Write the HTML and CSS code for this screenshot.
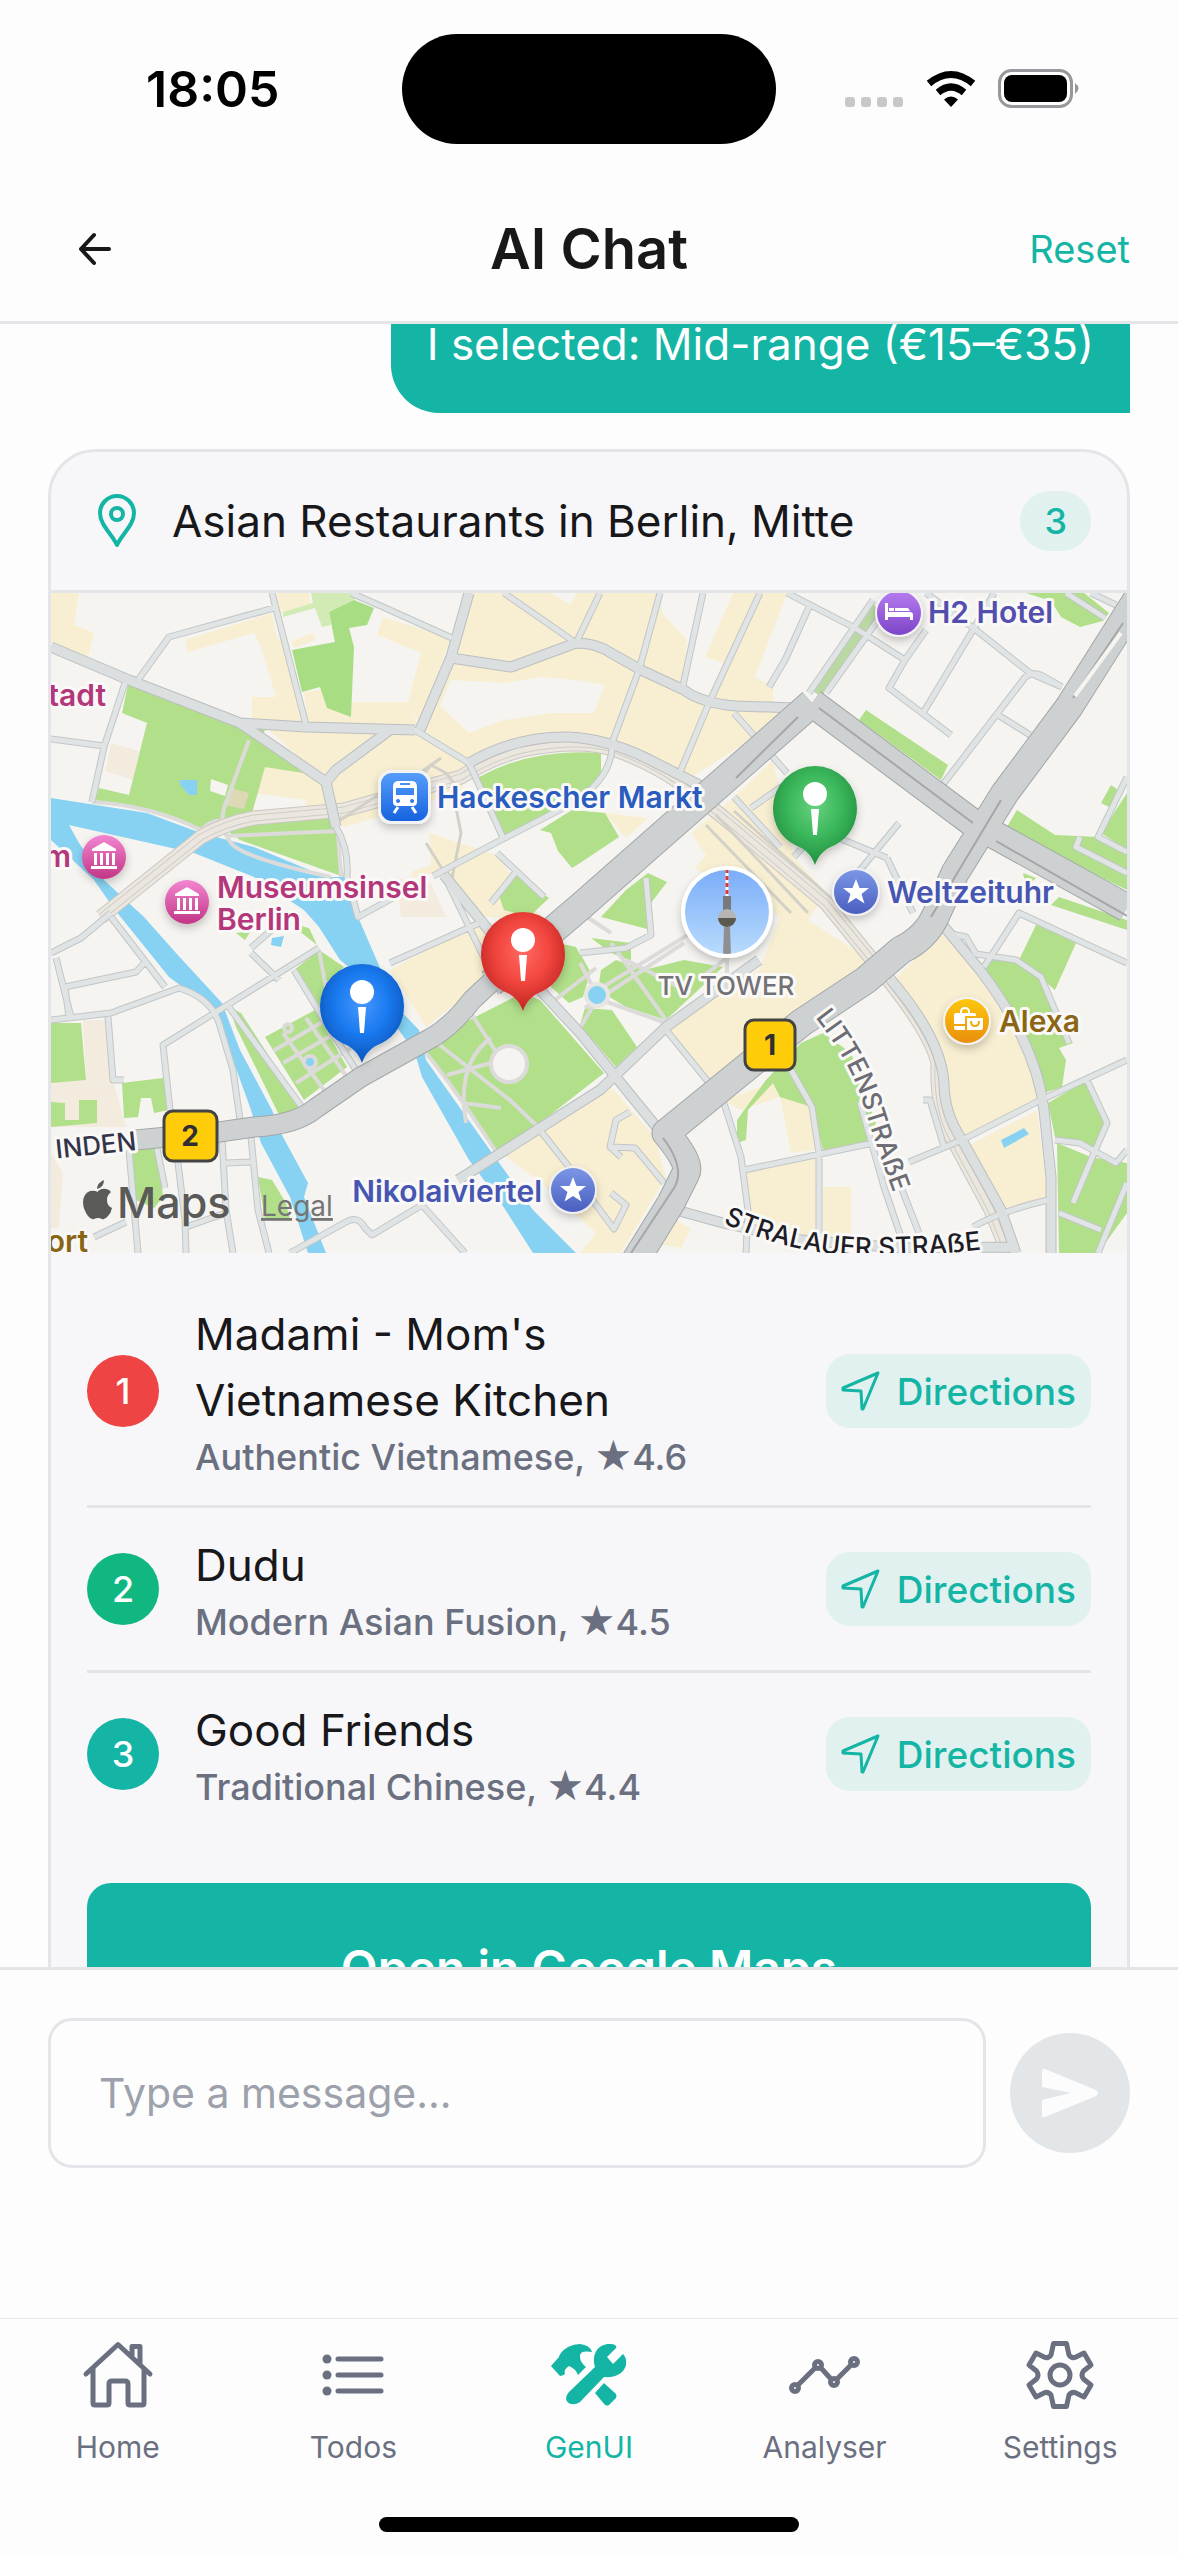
FILE: index.html
```html
<!DOCTYPE html>
<html lang="en">

<head>
    <meta charset="UTF-8" />
    <meta name="viewport" content="width=device-width, initial-scale=1.0" />
    <title>AI Chat</title>
    <link rel="stylesheet" href="styles.css">
</head>

<body>
    <div class="status-bar">
        <span class="time">18:05</span>
        <div class="island"></div>
        <div class="status-icons">
            <svg width="60" height="40" viewBox="0 0 60 40" fill="#c8c8c8">
                <rect x="1" y="28" width="10" height="10" rx="3" />
                <rect x="17" y="28" width="10" height="10" rx="3" />
                <rect x="33" y="28" width="10" height="10" rx="3" />
                <rect x="49" y="28" width="10" height="10" rx="3" />
            </svg>
            <svg width="50" height="40" viewBox="0 0 50 40">
                <path d="M25 38l-7-7.500q7-6 14 0z" />
                <path d="M12 23.500q13-11 26 0" fill="none" stroke="#000" stroke-width="7" />
                <path d="M3 14.500q22-18 44 0" fill="none" stroke="#000" stroke-width="7" />
            </svg>
            <svg width="82" height="40" viewBox="0 0 82 40">
                <rect x="1.500" y="1.500" width="72" height="36" rx="12" fill="#fff" stroke="#98989c" stroke-width="3" />
                <rect x="6" y="6" width="63" height="27" rx="8" />
                <path d="M77 14q7 5 0 11z" fill="#98989c" />
            </svg>
        </div>
    </div>

    <header class="header">
        <button class="back" aria-label="Back">
            <svg width="34" height="34" viewBox="0 0 34 34" fill="none" stroke="#18181b" stroke-width="4" stroke-linecap="round" stroke-linejoin="round">
                <path d="M31 17H3M16 3L3 17l13 14" />
            </svg>
        </button>
        <h1>AI Chat</h1>
        <button class="reset">Reset</button>
    </header>

    <main class="chat">
        <p class="bubble">I selected: Mid-range (€15–€35)</p>

        <section class="card">
            <div class="card-header">
                <svg width="38" height="54" viewBox="0 0 38 54" fill="none" stroke="#14b5a5" stroke-width="4" stroke-linejoin="round">
                    <path d="M19 51C14 40 2 31 2 19a17 17 0 0 1 34 0c0 12-12 21-17 32z" />
                    <circle cx="19" cy="20" r="6" />
                </svg>
                <h2>Asian Restaurants in Berlin, Mitte</h2>
                <span class="count">3</span>
            </div>

            <svg class="map" viewBox="0 0 1076 660" preserveAspectRatio="xMidYMid slice" role="img" aria-label="Map of Berlin Mitte">
                <defs>
                    <linearGradient id="pink" x2="0" y2="1"><stop stop-color="#f286d0" /><stop offset="1" stop-color="#c23585" /></linearGradient>
                    <linearGradient id="indigo" x2="0" y2="1"><stop stop-color="#7b96e6" /><stop offset="1" stop-color="#4a5fc0" /></linearGradient>
                    <linearGradient id="purple" x2="0" y2="1"><stop stop-color="#b67cf0" /><stop offset="1" stop-color="#7d45c8" /></linearGradient>
                    <linearGradient id="train" x2="0" y2="1"><stop stop-color="#559dfa" /><stop offset="1" stop-color="#1763e0" /></linearGradient>
                    <linearGradient id="gold" x2="0" y2="1"><stop stop-color="#fdc70a" /><stop offset="1" stop-color="#ea8e0c" /></linearGradient>
                    <linearGradient id="sky" x2="0" y2="1"><stop stop-color="#7badf8" /><stop offset="1" stop-color="#b8dbfd" /></linearGradient>
                    <radialGradient id="green" cy=".4" r=".62"><stop stop-color="#67d07f" /><stop offset=".5" stop-color="#3cb85c" /><stop offset="1" stop-color="#1f8b3d" /></radialGradient>
                    <radialGradient id="red" cy=".4" r=".62"><stop stop-color="#ff6a62" /><stop offset=".5" stop-color="#f2463f" /><stop offset="1" stop-color="#bb211e" /></radialGradient>
                    <radialGradient id="blue" cy=".4" r=".62"><stop stop-color="#4797fd" /><stop offset=".5" stop-color="#1a7af0" /><stop offset="1" stop-color="#0850b4" /></radialGradient>
                    <clipPath id="tower-clip"><circle cx="676" cy="319" r="42" /></clipPath>
                    <filter id="shadow" x="-40%" y="-40%" width="180%" height="180%"><feDropShadow dx="0" dy="4" stdDeviation="4" flood-opacity=".22" /></filter>

                    <g id="museum">
                        <circle r="22" fill="url(#pink)" />
                        <path d="M-12-6v-2L0-15l12 7v2zM-10-4h3V8h-3zM-4-4h3V8h-3zM2-4h3V8H2zM8-4h3V8H8zM-13 9h26v3h-26z" fill="#fff" />
                    </g>
                    <g id="star">
                        <circle r="24" fill="#f3f3f6" opacity=".8" />
                        <circle r="22" fill="url(#indigo)" />
                        <path d="M0-13l3.500 9h9.500l-7.500 6 3 9.500L0 6l-8.500 5.500 3-9.500-7.500-6h9.500z" fill="#fff" />
                    </g>
                    <path id="pin" d="M0 0C-3-9-9-16-20-20-34-27-42-41-42-57a42 42 0 0 1 84 0C42-41 34-27 20-20 9-16 3-9 0 0z" />
                    <g id="needle" fill="#fff">
                        <circle cy="-71" r="12" />
                        <path d="M-4-56h8L2-30h-4z" />
                    </g>

                    <path id="streets-minor" d="M87 87L118 44 223 15M221 0L255 132M75 87L53 154 41 209M0 146L53 153M300 0L332 14 401 45M453 0L525 50 549 0M609 0L588 77 561 150Q562 175 540 196L514 214 450 247 382 283M652 0L631 97M709 0L658 110 627 184M285 234Q298 255 296 284L307 324 360 295M364 137L418 170 453 247M736 0L804 35 854 67 838 95 900 142M758 14L734 67 718 94M822 7L758 100M829 24L775 100M854 67L875 37M922 37L872 120M875 0L925 37 979 80 1011 94M943 0L922 37M1011 94L990 82Q978 78 972 87L890 194M947 122L979 142M1015 0L1054 25M1040 0L1065 12M683 120L736 180M683 204L729 254M1076 184L1047 244 1076 259M1029 244L1025 254 1076 280M60 324L114 394M0 427L60 420 128 395Q160 405 168 430L182 477 189 527M268 355L112 452 119 517 127 570 134 627 135 660M14 394L85 379 96 367M14 394L18 424M57 424L62 487 73 487M78 557L87 660M106 555L114 595M171 544L175 617 182 660M200 544L207 617 218 660M175 570L200 569M43 644L75 629M135 634L175 620M239 660L295 629Q307 622 314 635L321 642 371 612 414 660M485 532L518 574M615 437L672 507 690 564 697 617 695 660M693 577L822 550M740 477L761 514 768 560 768 660M809 509L833 594 850 644M850 594L868 640M858 569L911 547 990 507 1076 467M872 507L879 507 893 554M922 634Q950 618 997 607M1036 487L1056 530 1043 560 1022 610M1004 547L1029 550 1065 570 1076 557M933 374L968 320 1076 370M896 340L915 344 925 361 965 367 990 384 1018 450M579 519L565 527 559 554 570 564M559 554L584 555 613 590M560 600L575 612 563 636 540 605M393 282L450 400M446 260L493 304M464 280L440 310M243 377L275 430 307 480M178 414L253 517M200 360L228 387M200 355L225 333M339 370L435 327M0 360L30 345 60 320M5 365L20 424M529 360L575 355 600 342 595 285M1050 637L1008 620M1076 590L1047 660M736 190L700 215M743 264L790 210M764 235L836 265M790 300L848 230M836 265L862 320" />
                    <path id="streets-mid" d="M0 54L78 87 189 130 255 134 364 137M418 0L400 64 369 137M400 65L460 74 525 50Q545 50 560 60L590 77 633 97Q650 110 685 113L745 115M189 130L275 189 285 234M275 189L285 177 339 137M418 170Q464 143 518 144 555 146 593 164L672 204M393 282L440 340M489 397L529 440 608 537M407 587L549 497 615 434 708 367M890 330L929 377Q985 450 993 517L1000 584 1000 660M840 387Q890 445 893 490 893 520 911 547L950 617 965 660M625 617L672 630 750 647 850 655 965 654" />
                    <path id="avenue-west" d="M85 547L168 539 203 534Q245 532 265 515L310 484 382 444Q402 432 421 407L450 380 529 314" />
                    <path id="avenue-main" d="M440 390L529 314 761 110M761 110L922 230 1076 315M1090 0L1018 114 954 200 904 280 885 322Q875 345 850 357L815 387 750 430 615 540Q640 570 635 580T620 610L583 670" />
                    <path id="rail" d="M50 324L150 244Q175 230 203 225L293 217 410 184Q440 165 471 157 530 145 565 157 600 170 625 187L672 224 775 310 836 385Q880 440 887 470 885 520 904 550L940 617 957 660" />

                    <path id="line-littenstr" d="M764 424Q800 470 812 510T846 610" />
                    <path id="line-stralauer" d="M672 630Q740 661 810 663 880 664 960 653" />
                </defs>

                <rect width="1076" height="660" fill="#f5f4f1" />

                <!-- built-up blocks -->
                <g fill="#f8efd2">
                    <path d="M0 0H28L23 32 43 40 37 64 0 50zM134 47L221 20 226 45 235 50 255 130 201 125V104H225L210 54 203 40 137 59zM253 99L271 97 276 115 300 124 301 109H357L368 134H257zM226 0H258L260 12 228 20zM241 48L262 40 264 47 243 55zM332 24L400 45 368 130 357 109 370 60 326 42z" />
                    <path d="M421 0H736L704 84 722 94V114L745 118 636 187 558 147 525 142 421 170 368 134z" />
                    <path d="M218 137H368L418 170 410 200 293 234 282 222H255V207L203 200 214 172 253 180 275 189zM722 167L743 264 775 300 757 327 708 377 729 324 644 275 655 262 640 240 683 204zM339 377L432 327 439 384 375 434zM378 240L446 262 489 324H435L382 280 360 285 362 278 380 272z" />
                    <path d="M708 377L757 327 829 374 779 400 658 487 615 434zM890 340L929 380Q980 440 986 507L911 547Q885 500 886 460L843 387zM915 554L986 517 997 604 954 620zM693 580L765 564V655L699 637zM772 594H800V650H772zM722 490L757 500 765 557 740 560 729 504 690 517 672 507zM450 560L554 487 604 544 615 584 570 660H529L545 640 490 590z" />
                    <path d="M554 220L597 225 575 245zM610 620L640 635 630 655 600 650z" />
                </g>
                <path d="M32 427H57L62 487 75 534H0V487L35 484zM60 150L88 158 82 187 54 178zM0 560L12 580 8 635H0zM345 285L380 290 395 324H350z" fill="#f4ebdf" />
                <g fill="#f5f4f1">
                    <path d="M400 87L453 90 490 84 525 87 554 92 543 120 500 120 453 127 418 140 389 113zM609 0H682L654 64 672 70 654 110 632 94 636 47 611 20zM500 0H525L520 12z" />
                </g>

                <!-- parks -->
                <path d="M260 0H310L303 7 278 19 280 32 271 34 264 15 232 24V19L262 10z" fill="#d2ebb5" />
                <path d="M241 57L284 49 278 19 303 7 323 15 316 32 298 35 303 54 300 124 276 115 269 94 251 99z" fill="#a9dd83" />
                <g fill="#b1df8a">
                    <path d="M78 87L189 130 252 180 214 174 201 220 171 227 150 235 93 217 44 207 48 195 78 202 96 130 71 120zM189 134L214 135 212 147zM175 237L203 227 282 224 293 284 189 247zM428 184Q480 155 550 160L550 185 514 214 453 244zM489 237L521 217 554 220 568 244 529 270 521 275 507 258 500 240zM464 280L498 305 478 324 453 317 446 297z" />
                    <path d="M815 117L897 172 890 187 808 127zM975 0H1033L1058 20 1052 28 1029 34 1010 24 1000 8zM966 217L1004 242 1047 244 1076 260V297L954 237zM1076 200L1050 240 1076 257zM1060 192L1071 200 1060 215 1050 210zM597 280L616 289 600 310 600 337 550 324 575 297zM1008 304L1076 327V337L1000 312zM972 280L985 285 975 295z" />
                    <path d="M986 330L1025 350 1004 397 968 367zM940 360L968 367 990 384 1008 427 1022 450 1008 455 1015 467 1011 494 993 500 972 444 929 377zM997 510L1036 487 1054 530 1043 557 1004 544zM1006 550L1040 564 1076 570V620L1047 660H1008z" />
                    <path d="M772 440L800 460 825 530 815 550 772 557 761 514 729 504 722 490 697 517 695 547 686 550V527L715 487 750 450zM550 377L565 367 593 377 633 367 672 374 615 427 575 414 547 397zM534 415L561 417 586 454 565 474 529 432zM540 345L580 350 580 368 560 360zM529 360L540 380 529 400z" />
                    <path d="M393 440L471 400 489 407 553 480 489 530 446 557 375 460zM507 350L525 354 539 380 532 404 518 410 500 394zM178 414L190 420 253 517 228 522 185 434zM214 444L264 417 296 474 253 507zM243 377L268 357 293 374 275 390 271 417zM185 340L200 338 194 347zM238 330L258 335 266 352z" />
                    <path d="M0 430H30L35 487 0 490zM71 490L112 485 118 517 103 520 100 505 90 505 87 524 73 525zM0 509L14 510 14 527 28 527 28 507H46V530L0 534zM80 557L107 554 112 604 103 615 85 607zM207 584L221 587 235 610 239 627H214z" />
                </g>
                <path d="M180 195L198 200 193 216 173 212z" fill="#ddd9b4" />
                <path d="M160 186L177 192 174 203 159 198z" fill="#f5f4f1" />
                <path d="M822 10L829 20 770 104 762 98z" fill="#b9d8a2" />

                <!-- water -->
                <g fill="#87d2f3">
                    <path d="M0 205L96 220 150 240 203 254 275 284 293 284 307 324 346 414 368 437 375 467 446 567 482 617 525 660H482L450 610 418 567 371 484 364 460 350 440 310 384 289 367 268 334 253 317 203 284 143 260 18 232 28 250 53 287 93 324 125 360 171 410 189 457 221 517 232 544 257 590 253 604 275 660H257L239 604 210 550 200 517 164 417 118 384 64 317 43 287 0 247z" />
                    <path d="M128 187H146V202H138L130 193zM221 345L233 343 230 354 220 352zM950 547L973 535 978 541 953 555z" />
                </g>

                <!-- footpaths -->
                <g fill="none" stroke="#dddbd9" stroke-width="4">
                    <path d="M198 147L173 215Q168 235 180 250T280 284M41 209Q100 212 150 237 160 226 172 228M175 243L286 238M287 240L290 284M386 450L460 508 485 532M420 420L447 462M440 445Q405 470 415 530M375 460Q400 490 446 560M396 482L440 470M412 510L450 515M222 458L278 425M232 470L290 437M245 490L300 455M232 440L275 500M255 425L300 490M268 357L275 395M534 415L633 350M560 350L615 427M547 397L640 340M529 370L545 400M575 367L640 400M545 405L615 430M547 405L529 435M500 410L545 375M650 385L708 340M676 366V385M530 320L560 340" />
                    <circle cx="458" cy="471" r="18" fill="#f5f4f1" />
                    <circle cx="546" cy="402" r="11" fill="#87d2f3" stroke="#e8e6e3" />
                    <circle cx="259" cy="469" r="6" fill="#87d2f3" />
                    <circle cx="237" cy="435" r="4" />
                </g>

                <!-- streets, casing first and fill on top -->
                <g fill="none" stroke-linejoin="round">
                    <use href="#rail" stroke="#c9c7c3" stroke-width="15" />
                    <use href="#rail" stroke="#ebe7df" stroke-width="13" />
                    <use href="#rail" stroke="#cfcdc8" stroke-width="7" />
                    <use href="#rail" stroke="#ebe7df" stroke-width="5" />
                    <path d="M665 222L757 320M655 232L740 320M683 218L780 305M340 200L390 165M345 215L380 172 395 180 410 200M285 230L330 200M375 250L400 290 410 240 400 190" stroke="#d3d0c8" stroke-width="3" />
                    <use href="#streets-minor" stroke="#c2c6c7" stroke-width="7" />
                    <use href="#streets-mid" stroke="#bbbfc0" stroke-width="11" />
                    <use href="#streets-minor" stroke="#e0e4e4" stroke-width="5" />
                    <use href="#streets-mid" stroke="#dbdfe0" stroke-width="9" />
                    <use href="#avenue-west" stroke="#a3a6a8" stroke-width="21" />
                    <use href="#avenue-main" stroke="#a3a6a8" stroke-width="29" />
                    <use href="#avenue-west" stroke="#cdd1d2" stroke-width="19" />
                    <use href="#avenue-main" stroke="#cdd1d2" stroke-width="27" />
                    <path d="M768 115L922 230M685 185L747 124M950 207L880 324M1072 30L1022 105M612 545Q635 575 623 595L580 660M945 248L1076 323" stroke="#a6a6a8" stroke-width="2" />
                    <path d="M1070 40L1024 103" stroke="#f5f4f1" stroke-width="4" />
                </g>

                <!-- labels -->
                <g class="map-labels">
                    <text x="55" y="113" text-anchor="end" fill="#b3377a">tadt</text>
                    <text x="20" y="274" text-anchor="end" fill="#b3377a">m</text>
                    <text x="166" y="305" fill="#b3377a">Museumsinsel</text>
                    <text x="166" y="337" fill="#b3377a">Berlin</text>
                    <text x="386" y="215" fill="#2a5cc0">Hackescher Markt</text>
                    <text x="877" y="30" fill="#524fae">H2 Hotel</text>
                    <text x="836" y="310" fill="#4656b2">Weltzeituhr</text>
                    <text x="948" y="439" fill="#8a6614">Alexa</text>
                    <text x="491" y="609" text-anchor="end" fill="#4656b2">Nikolaiviertel</text>
                    <text x="37" y="659" text-anchor="end" fill="#8a6614">ort</text>
                    <text class="small" x="675" y="402" text-anchor="middle" fill="#727276">TV TOWER</text>
                    <text class="small" transform="translate(86 557) rotate(-6)" text-anchor="end" fill="#33334a">INDEN</text>
                    <text class="small" fill="#6c6c74"><textPath href="#line-littenstr">LITTENSTRAẞE</textPath></text>
                    <text class="small" fill="#1d1d27"><textPath href="#line-stralauer">STRALAUER STRAẞE</textPath></text>
                </g>

                <use href="#museum" x="53" y="264" filter="url(#shadow)" />
                <use href="#museum" x="136" y="309" filter="url(#shadow)" />
                <use href="#star" x="805" y="299" filter="url(#shadow)" />
                <use href="#star" x="522" y="597" filter="url(#shadow)" />

                <g transform="translate(848 20)" filter="url(#shadow)">
                    <circle r="24" fill="#f3f3f6" />
                    <circle r="22" fill="url(#purple)" />
                    <path d="M-14-10h3v9h22q3 0 3 3v5h-3V4h-22v3h-3zM-10-5h5v3h-5zM-4-5H9l2 3H-4z" fill="#fff" />
                </g>

                <g transform="translate(330 180)" filter="url(#shadow)">
                    <rect x="-3" y="-3" width="53" height="54" rx="13" fill="#f3f3f6" />
                    <rect width="47" height="48" rx="11" fill="url(#train)" />
                    <path fill-rule="evenodd" d="M17 8h14q5 0 5 6v15q0 4-4 4H16q-4 0-4-4V14q0-6 5-6zM15 15v7h18v-7zM19 10v2h10v-2zM17 26a2 2 0 1 0 .1 0zM31 26a2 2 0 1 0 .1 0z" fill="#fff" />
                    <path d="M17 34l-4 6M31 34l4 6" stroke="#fff" stroke-width="3" />
                </g>

                <g transform="translate(916 428)" filter="url(#shadow)">
                    <circle r="24" fill="#f3f3f6" />
                    <circle r="22" fill="url(#gold)" />
                    <path d="M-6-7v-2q0-4 4-4t4 4v2" fill="none" stroke="#fff" stroke-width="2" />
                    <path d="M-13-6q0-2 2-2H7q2 0 2 2v1H-2v8h-11zM-13 5h11v4h-9q-2 0-2-2zM0-3h16V7q0 2-2 2H0z" fill="#fff" />
                    <path d="M4 0q0 5 4 5t4-5" fill="none" stroke="#f5a80b" stroke-width="2" />
                </g>

                <g filter="url(#shadow)">
                    <circle cx="676" cy="319" r="46" fill="#fff" />
                    <circle cx="676" cy="319" r="42" fill="url(#sky)" />
                    <g clip-path="url(#tower-clip)">
                        <path d="M676 276v28" stroke="#fff" stroke-width="3" />
                        <path d="M676 276v28" stroke="#e0352b" stroke-width="3" stroke-dasharray="4 3" />
                        <path d="M672 303h8v14h-8z" fill="#77797c" />
                        <path d="M673 334h6l1 28h-8z" fill="#8d8f92" />
                        <circle cx="676" cy="325" r="9" fill="#b5b5b6" />
                        <path d="M667 325a9 9 0 0 0 18 0z" fill="#5b5a50" />
                    </g>
                </g>

                <g class="shield">
                    <rect x="694" y="427" width="50" height="50" rx="9" />
                    <text x="719" y="462">1</text>
                    <rect x="113" y="518" width="53" height="50" rx="9" />
                    <text x="139" y="553">2</text>
                </g>

                <g transform="translate(764 272)"><use href="#pin" fill="url(#green)" filter="url(#shadow)" /><use href="#needle" /></g>
                <g transform="translate(311 470)"><use href="#pin" fill="url(#blue)" filter="url(#shadow)" /><use href="#needle" /></g>
                <g transform="translate(472 418)"><use href="#pin" fill="url(#red)" filter="url(#shadow)" /><use href="#needle" /></g>

                <g fill="#5a5a59">
                    <path d="M47 598q4-3 8-2 3 0 5 3-4 3-4 8 0 6 5 8-1 5-4 8-3 4-6 3-4-2-8 0-3 1-6-3-5-7-5-14 0-8 7-11 4-1 8 1zM46 596q0-6 7-9 0 7-7 9z" />
                    <text class="maps" x="66" y="625">Maps</text>
                    <text class="legal" x="210" y="623">Legal</text>
                </g>
            </svg>

            <ul class="places">
                <li>
                    <span class="number red">1</span>
                    <div class="place">
                        <h3>Madami - Mom's Vietnamese Kitchen</h3>
                        <p>Authentic Vietnamese, <span class="star">★</span>4.6</p>
                    </div>
                    <button class="directions">
                        <svg width="40" height="40" viewBox="0 0 40 40"><path d="M37 2L2 17v2l18 1 1 18h1z" /></svg>
                        Directions
                    </button>
                </li>
                <li>
                    <span class="number green">2</span>
                    <div class="place">
                        <h3>Dudu</h3>
                        <p>Modern Asian Fusion, <span class="star">★</span>4.5</p>
                    </div>
                    <button class="directions">
                        <svg width="40" height="40" viewBox="0 0 40 40"><path d="M37 2L2 17v2l18 1 1 18h1z" /></svg>
                        Directions
                    </button>
                </li>
                <li>
                    <span class="number teal">3</span>
                    <div class="place">
                        <h3>Good Friends</h3>
                        <p>Traditional Chinese, <span class="star">★</span>4.4</p>
                    </div>
                    <button class="directions">
                        <svg width="40" height="40" viewBox="0 0 40 40"><path d="M37 2L2 17v2l18 1 1 18h1z" /></svg>
                        Directions
                    </button>
                </li>
            </ul>

            <button class="open-maps">Open in Google Maps</button>
        </section>
    </main>

    <form class="composer">
        <input type="text" placeholder="Type a message..." aria-label="Message">
        <button class="send" type="button" aria-label="Send">
            <svg width="58" height="50" viewBox="0 0 58 50" fill="#fcfcfd">
                <path d="M1 3q0-3 3-2l51 21q4 3 0 6L4 49q-3 1-3-2V32l29-7-29-6z" />
            </svg>
        </button>
    </form>

    <nav class="tabs">
        <a href="#">
            <svg viewBox="0 0 72 72">
                <path d="M4 35L36 5.500 68 35M50 18V7.500h8V25M11 30v34q0 2 2 2h12q2 0 2-2V45q0-3 3-3h13q3 0 3 3v19q0 2 2 2h12q2 0 2-2V30" />
            </svg>
            Home
        </a>
        <a href="#">
            <svg viewBox="0 0 72 72">
                <path d="M21 20h43M21 36h43M21 52h43" />
                <g class="solid"><circle cx="10" cy="20" r="4.500" /><circle cx="10" cy="36" r="4.500" /><circle cx="10" cy="52" r="4.500" /></g>
            </svg>
            Todos
        </a>
        <a href="#" class="active">
            <svg viewBox="0 0 72 72">
                <g class="solid">
                    <path d="M16 53L42 28C38 14 46 4 58 5q5 0 5.500 3.500L54 18l6 7 10-10q4 4 3 11c-2 9-12 13-22 12L27 63c-9 6-19-1-11-10z" />
                    <path d="M-2 27l8-9q1-5 9-10 6-3 12-3 10 1 12 8-13-2-12 5 0 5 6 10l-8 8q-2-6-9-9-6 4-4 8-3 2-5 2z" />
                    <path d="M51 44l12 11q1 2 0 4l-7 7q-2 1-4 0L42 54z" />
                </g>
            </svg>
            GenUI
        </a>
        <a href="#">
            <svg viewBox="0 0 72 72">
                <path d="M9 46L26 29M32 29L42 40M48 40L62 26" />
                <circle cx="6" cy="49" r="3.500" /><circle cx="29" cy="26" r="3.500" /><circle cx="45" cy="43" r="3.500" /><circle cx="65" cy="23" r="3.500" />
            </svg>
            Analyser
        </a>
        <a href="#">
            <svg viewBox="0 0 72 72">
                <path d="M29.500 4.500h13l2.500 11.500q3 4 7 2l8-4 7 12-7.500 6q-3 4 0 8l7.500 6-7 12-8-4q-4-2-7 2l-2.500 11.500h-13l-2.500-11.500q-3-4-7-2l-8 4-7-12 7.500-6q3-4 0-8l-7.500-6 7-12 8 4q4 2 7-2z" />
                <circle cx="36" cy="36" r="10" />
            </svg>
            Settings
        </a>
    </nav>
    <div class="home-indicator"></div>
</body>

</html>
```

FILE: styles.css
```css
* {
    box-sizing: border-box;
}

body {
    margin: 0;
    height: 100vh;
    display: flex;
    flex-direction: column;
    background: #fdfdfd;
    color: #18181b;
    font-family: Inter, "DejaVu Sans", sans-serif;
}

h1,
h2,
h3,
p,
ul {
    margin: 0;
    padding: 0;
}

button {
    border: none;
    background: none;
    padding: 0;
    font-family: inherit;
    color: inherit;
    cursor: pointer;
}

svg {
    flex: none;
    display: block;
}

/* status bar */
.status-bar {
    flex: none;
    height: 177px;
    display: grid;
    grid-template-columns: 1fr 374px 1fr;
    align-items: center;
}

.time {
    padding-left: 146px;
    font-size: 50px;
    font-weight: 600;
    color: #000;
}

.island {
    height: 110px;
    border-radius: 55px;
    background: #000;
}

.status-icons {
    display: flex;
    justify-content: flex-end;
    gap: 22px;
    padding-right: 98px;
}

/* header */
.header {
    flex: none;
    height: 147px;
    display: grid;
    grid-template-columns: 1fr auto 1fr;
    align-items: center;
    padding: 0 48px;
    border-bottom: 3px solid #e4e5e8;
}

.back {
    justify-self: start;
    padding: 24px 30px;
}

.header h1 {
    font-size: 56px;
    font-weight: 600;
}

.reset {
    justify-self: end;
    font-size: 38px;
    color: #14b5a5;
}

/* chat */
.chat {
    flex: 1;
    min-height: 0;
    overflow: hidden;
    padding: 0 48px;
    display: flex;
    flex-direction: column;
}

.bubble {
    flex: none;
    align-self: flex-end;
    margin-top: -49px;
    padding: 36px;
    background: #14b5a5;
    color: #fff;
    font-size: 44px;
    line-height: 66px;
    border-radius: 48px 48px 0 48px;
}

.card {
    flex: none;
    margin-top: 36px;
    background: #f7f7fa;
    border: 3px solid #e4e5e8;
    border-radius: 48px;
    overflow: hidden;
}

.card-header {
    display: flex;
    align-items: center;
    gap: 36px;
    height: 141px;
    padding: 0 36px 0 47px;
    border-bottom: 3px solid #e4e5e8;
}

.card-header h2 {
    flex: 1;
    font-size: 44px;
    font-weight: 400;
}

.count {
    padding: 0 24px;
    line-height: 60px;
    border-radius: 30px;
    background: #e0f1ef;
    color: #14b5a5;
    font-size: 36px;
    font-weight: 500;
}

/* map */
.map {
    width: 100%;
    height: 660px;
}

.map-labels text {
    font-size: 30px;
    font-weight: 600;
    stroke: #faf9f7;
    stroke-width: 6px;
    stroke-linejoin: round;
    paint-order: stroke;
}

.map-labels .small {
    font-size: 26px;
    font-weight: 500;
}

.shield rect {
    fill: #ffcc0a;
    stroke: #434343;
    stroke-width: 3px;
}

.shield text {
    font-size: 28px;
    font-weight: 700;
    text-anchor: middle;
    fill: #2e2e33;
}

.maps {
    font-size: 43px;
    font-weight: 500;
}

.legal {
    font-size: 28px;
    fill: #757575;
    text-decoration: underline;
}

/* list of places */
.places {
    list-style: none;
    padding: 24px 36px;
}

.places li {
    display: flex;
    align-items: center;
    gap: 36px;
    padding: 24px 0;
    border-bottom: 3px solid #e4e5e8;
}

.places li:last-child {
    border-bottom: none;
}

.number {
    flex: none;
    width: 72px;
    line-height: 72px;
    border-radius: 50%;
    text-align: center;
    color: #fff;
    font-size: 36px;
    font-weight: 500;
}

.red {
    background: #ef4444;
}

.green {
    background: #10b781;
}

.teal {
    background: #14b5a5;
}

.place {
    flex: 1;
}

.place h3 {
    max-width: 480px;
    font-size: 44px;
    font-weight: 400;
    line-height: 66px;
}

.place p {
    font-size: 36px;
    font-weight: 500;
    line-height: 48px;
    color: #6b7080;
}

.star {
    font-family: "DejaVu Sans", sans-serif;
    font-size: 42px;
    line-height: 1;
}

.directions {
    display: flex;
    align-items: center;
    gap: 16px;
    height: 74px;
    padding: 0 15px;
    border-radius: 24px;
    background: #e0f1ef;
    color: #14b5a5;
    font-size: 37px;
    font-weight: 500;
}

.directions path {
    fill: none;
    stroke: #14b5a5;
    stroke-width: 3px;
    stroke-linejoin: round;
}

.open-maps {
    display: block;
    width: calc(100% - 72px);
    height: 168px;
    margin: 24px 36px 36px;
    border-radius: 24px;
    background: #14b5a5;
    color: #fff;
    font-size: 48px;
    font-weight: 600;
}

/* message box */
.composer {
    flex: none;
    display: flex;
    align-items: center;
    gap: 24px;
    padding: 48px 48px 150px;
    border-top: 3px solid #e4e5e8;
}

.composer input {
    flex: 1;
    min-width: 0;
    height: 150px;
    padding: 0 48px;
    border: 3px solid #e4e5e8;
    border-radius: 24px;
    background: #fdfdfd;
    font-family: inherit;
    font-size: 41px;
}

.composer input::placeholder {
    color: #9ca1ab;
}

.send {
    flex: none;
    display: flex;
    align-items: center;
    justify-content: center;
    width: 120px;
    height: 120px;
    border-radius: 50%;
    background: #e3e6e9;
}

/* tab bar */
.tabs {
    flex: none;
    display: flex;
    height: 199px;
    padding-top: 20px;
    border-top: 1px solid #e4e5e8;
}

.tabs a {
    flex: 1;
    display: flex;
    flex-direction: column;
    align-items: center;
    gap: 16px;
    color: #6b7080;
    font-size: 30px;
    line-height: 40px;
    text-decoration: none;
}

.tabs .active {
    color: #14b5a5;
}

.tabs svg {
    width: 72px;
    height: 72px;
    overflow: visible;
    fill: none;
    stroke: currentColor;
    stroke-width: 5px;
    stroke-linecap: round;
    stroke-linejoin: round;
}

.tabs .solid {
    fill: currentColor;
    stroke: none;
}

.home-indicator {
    flex: none;
    align-self: center;
    width: 420px;
    height: 15px;
    margin-bottom: 24px;
    border-radius: 8px;
    background: #000;
}
```
